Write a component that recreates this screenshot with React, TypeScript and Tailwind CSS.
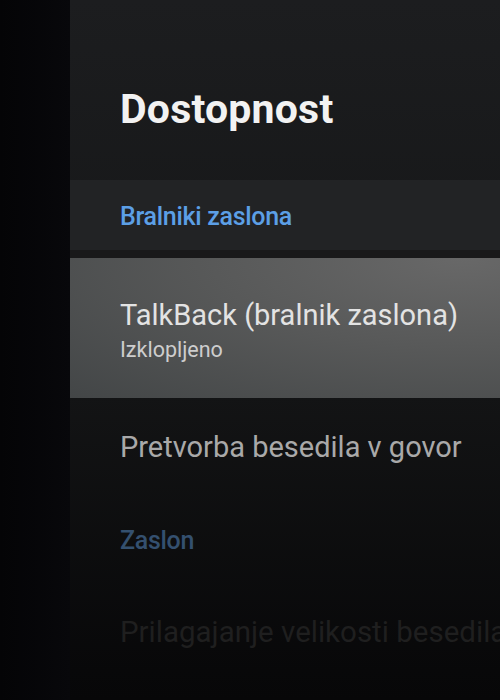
export default function App() {
  return (
    <div className="flex h-[700px] w-[500px] overflow-hidden bg-[#050507] font-['Roboto',sans-serif]">
      {/* left dim strip */}
      <div className="w-[70px] shrink-0 bg-gradient-to-r from-[#040406] to-[#08080b]" />

      {/* settings panel */}
      <div className="flex flex-1 flex-col bg-gradient-to-b from-[#1c1d1f] via-[#151617] to-[#070708]">
        <div className="flex h-[180px] items-center pl-[50px] pt-[40px]">
          <h1 className="text-[41px] font-bold tracking-[0.2px] text-[#f2f2f2]">Dostopnost</h1>
        </div>

        <div className="flex h-[70px] items-center bg-[#222325] pl-[50px] pt-[4px]">
          <span className="text-[25px] font-medium tracking-[-0.3px] text-[#5c9fe6]">Bralniki zaslona</span>
        </div>

        <div className="h-[8px] bg-[#19191a]" />

        <div className="flex h-[140px] flex-col justify-center bg-[radial-gradient(ellipse_at_90%_0%,#686868_0%,#585959_45%,#434647_100%)] pl-[50px] pt-[6px]">
          <span className="text-[29px] leading-[38px] text-[#e3e3e3]">TalkBack (bralnik zaslona)</span>
          <span className="text-[21.5px] leading-[32px] text-[#cdcdcd]">Izklopljeno</span>
        </div>

        <div className="flex h-[100px] items-center pl-[50px]">
          <span className="text-[29px] text-[#a9a9a9]">Pretvorba besedila v govor</span>
        </div>

        <div className="flex h-[86px] items-center pl-[50px]">
          <span className="text-[25px] font-medium tracking-[-0.3px] text-[#34506f]">Zaslon</span>
        </div>

        <div className="flex h-[96px] items-center pl-[50px]">
          <span className="whitespace-nowrap text-[29.5px] text-[#1f1f1f]">Prilagajanje velikosti besedila</span>
        </div>
      </div>
    </div>
  );
}
